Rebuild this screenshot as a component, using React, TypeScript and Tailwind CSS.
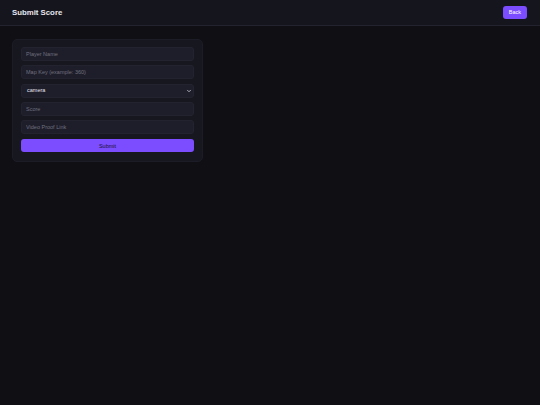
import { ChevronDown } from "lucide-react";

const inputClass =
  "h-[14px] rounded-[3px] border border-[#232330] bg-[#1e1e2b] px-[4px] text-[5.5px] text-[#d0d0da] outline-none placeholder:text-[#70707e]";

export default function App() {
  return (
    <div className="min-h-[405px] bg-[#0f0f14] font-['Liberation_Sans',Arial,sans-serif] text-[#e4e4ec]">
      {/* Header */}
      <header className="flex h-[26px] items-center justify-between border-b border-[#23232f] bg-[#15151e] pl-[12px] pr-[13px]">
        <h1 className="text-[7.8px] font-bold text-[#e8e8ee]">Submit Score</h1>
        <button
          type="button"
          className="h-[13px] rounded-[3px] bg-[#7c4dff] px-[6px] text-[5.5px] font-medium text-white"
        >
          Back
        </button>
      </header>

      <main className="p-[12px] pt-[13px]">
        <form className="flex w-[191px] flex-col gap-[4.3px] rounded-[5px] border border-[#1c1c27] bg-[#17171f] px-[8px] pt-[7px] pb-[8.5px]">
          <input type="text" placeholder="Player Name" className={inputClass} />
          <input type="text" placeholder="Map Key (example: 360)" className={inputClass} />
          <div className="flex h-[14px] items-center justify-between rounded-[3px] border border-[#232330] bg-[#1e1e2b] pl-[5px] pr-[1.5px] text-[5.5px] font-normal text-[#e4e4ec]">
            <span>camera</span>
            <ChevronDown size={6} strokeWidth={3} className="text-[#d8d8e0]" />
          </div>
          <input type="text" placeholder="Score" className={inputClass} />
          <input type="text" placeholder="Video Proof Link" className={inputClass} />
          <button
            type="submit"
            className="mt-[0.5px] h-[13.5px] rounded-[3px] bg-[#7c4dff] text-[5.5px] font-medium text-[#1a1033]"
          >
            Submit
          </button>
        </form>
      </main>
    </div>
  );
}
